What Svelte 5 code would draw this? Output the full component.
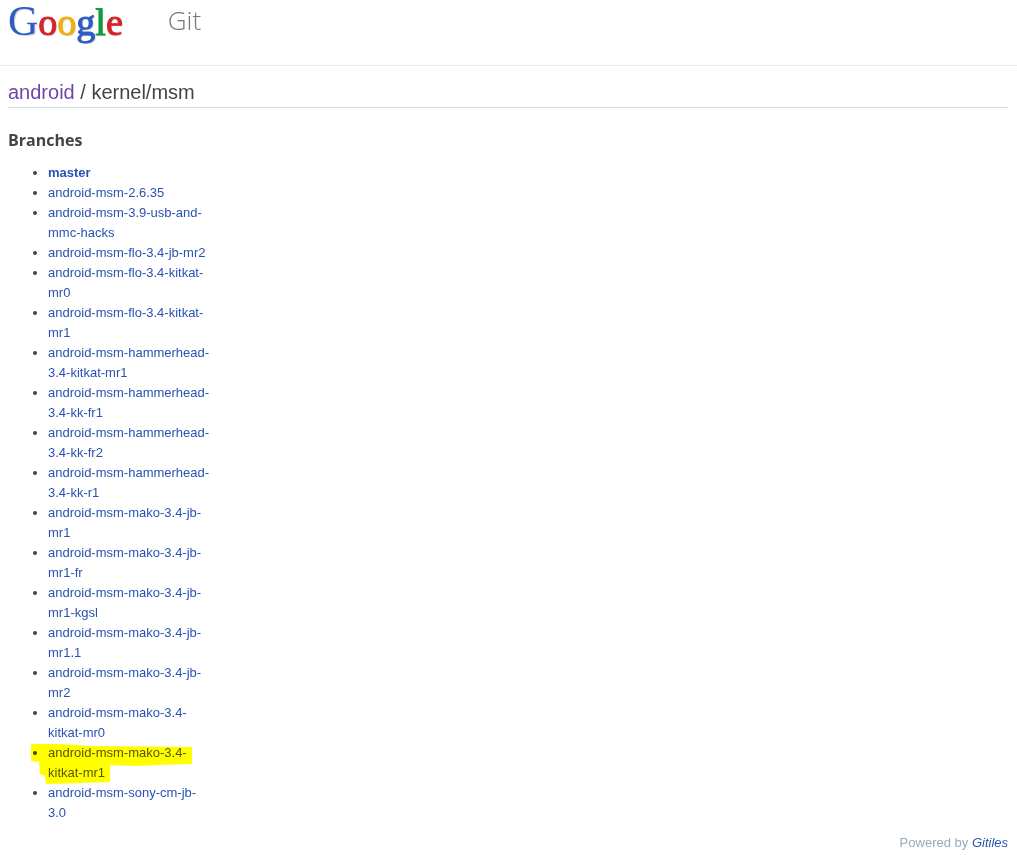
<script>
  const branches = [
    'master',
    'android-msm-2.6.35',
    'android-msm-3.9-usb-and-mmc-hacks',
    'android-msm-flo-3.4-jb-mr2',
    'android-msm-flo-3.4-kitkat-mr0',
    'android-msm-flo-3.4-kitkat-mr1',
    'android-msm-hammerhead-3.4-kitkat-mr1',
    'android-msm-hammerhead-3.4-kk-fr1',
    'android-msm-hammerhead-3.4-kk-fr2',
    'android-msm-hammerhead-3.4-kk-r1',
    'android-msm-mako-3.4-jb-mr1',
    'android-msm-mako-3.4-jb-mr1-fr',
    'android-msm-mako-3.4-jb-mr1-kgsl',
    'android-msm-mako-3.4-jb-mr1.1',
    'android-msm-mako-3.4-jb-mr2',
    'android-msm-mako-3.4-kitkat-mr0',
    'android-msm-mako-3.4-kitkat-mr1',
    'android-msm-sony-cm-jb-3.0'
  ];
  const marked = 'android-msm-mako-3.4-kitkat-mr1';
</script>

<header>
  <a class="logo" href="#home"><span class="cap blue">G</span><span class="red">o</span><span class="yellow">o</span><span class="blue">g</span><span class="green">l</span><span class="red">e</span></a>
  <span class="product">Git</span>
</header>

<main>
  <h1><a href="#android">android</a> / kernel/msm</h1>
  <h2>Branches</h2>
  <ul>
    {#each branches as name, i}
      <li class:head={i === 0} class:marked={name === marked}>
        {#if name === marked}
          <svg class="marker" viewBox="0 0 162 40" aria-hidden="true">
            <path d="M0 1H30L60 3L161 4V21L128 22L105 23L79 22L79 39L50 40L15 41L14 33L9 31L8 19L0 18Z" />
          </svg>
        {/if}
        <a href="#{name}">{name}</a>
      </li>
    {/each}
  </ul>
</main>

<footer>Powered by <a href="#gitiles">Gitiles</a></footer>

<style>
  :global(body) {
    background: #fff;
    color: #444;
    font-family: "Liberation Sans", Arial, sans-serif;
    font-size: 13px;
    line-height: 20px;
  }
  a {
    color: #2a52b0;
    text-decoration: none;
  }
  header {
    display: flex;
    align-items: flex-start;
    gap: 45px;
    height: 65px;
    padding-left: 8px;
    border-bottom: 1px solid #ebebeb;
  }
  .logo {
    font-family: "Liberation Serif", serif;
    font-size: 38px;
    line-height: 42px;
    text-shadow: 1px 1px 1px #ccc;
  }
  .logo span { -webkit-text-stroke: 1px currentColor; }
  .logo .cap {
    font-size: 42px;
    -webkit-text-stroke: 0;
  }
  .blue { color: #2c5cc5; }
  .red { color: #d5232b; }
  .yellow { color: #eeb012; }
  .green { color: #119b3c; }
  .product {
    color: #777;
    font-family: "Open Sans", sans-serif;
    font-size: 26px;
    font-weight: 300;
    line-height: 40px;
  }
  main { padding: 0 9px 0 8px; }
  h1 {
    margin: 0;
    padding-top: 11px;
    border-bottom: 1px solid #d4d9dd;
    font-size: 20px;
    font-weight: 400;
    line-height: 30px;
  }
  h1 a { color: #7045ab; }
  h2 {
    margin: 22px 0 13px;
    font-family: "Open Sans", sans-serif;
    font-size: 16px;
    font-weight: 700;
    line-height: 20px;
  }
  ul {
    width: 163px;
    margin: 0;
    padding: 0 0 0 40px;
  }
  li { position: relative; }
  .head { font-weight: 700; }
  .marked a { color: #5c5410; }
  .marker {
    position: absolute;
    top: 0;
    left: -17px;
    width: 162px;
    height: 40px;
    overflow: visible;
    fill: #ff0;
    mix-blend-mode: multiply;
    pointer-events: none;
  }
  footer {
    padding: 10px 9px 2px;
    color: #9aa9bf;
    text-align: right;
  }
  footer a { font-style: italic; }
</style>
